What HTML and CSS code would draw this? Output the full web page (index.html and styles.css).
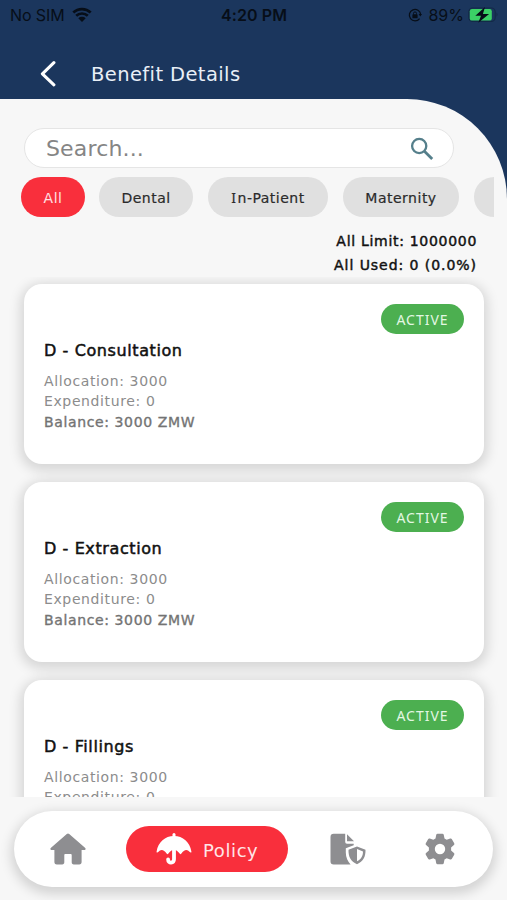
FILE: index.html
```html
<!DOCTYPE html>
<html lang="en">
<head>
<meta charset="utf-8">
<title>Benefit Details</title>
<link rel="stylesheet" href="styles.css">
</head>
<body>
<header class="top">
  <div class="status">
    <div class="status-left"><span class="carrier">No SIM</span>
      <svg class="wifi" width="20" height="16" viewBox="0 0 20 16"><path d="M1.3 5.6a12.6 12.6 0 0 1 17.4 0M4.2 8.8a8.4 8.4 0 0 1 11.6 0" fill="none" stroke="#070e18" stroke-width="2.7"/><path d="M6.3 11.2a5.4 5.4 0 0 1 7.4 0L10 15z" fill="#070e18"/></svg>
    </div>
    <span class="clock">4:20 PM</span>
    <div class="status-right">
      <svg width="14" height="14" viewBox="0 0 14 14"><path d="M11.6 10.6A5.7 5.7 0 1 1 12.7 6.5" fill="none" stroke="#070e18" stroke-width="1.3"/><path d="M10.6 6h3.4l-1.7 2.5z" fill="#070e18"/><rect x="4.4" y="6.3" width="5.2" height="4" rx=".6" fill="#070e18"/><path d="M5.5 6.5V5.4a1.5 1.5 0 0 1 3 0v1.1" fill="none" stroke="#070e18"/></svg>
      <span class="percent">89%</span>
      <svg class="battery" width="30" height="16" viewBox="0 0 30 16"><rect x=".8" y="1" width="26.4" height="13.4" rx="4" fill="none" stroke="#132a47" stroke-width="1.2"/><rect x="1.8" y="2" width="22" height="11.6" rx="2.2" fill="#3bd166"/><path d="M28.5 5.6q2 2.1 0 4.200z" fill="#132a47"/><path d="M17 0 7.300 8.700H13L10.300 15.800l10.800-8.900h-6.200z" fill="#070e18"/></svg>
    </div>
  </div>
  <div class="title-row">
    <svg class="back" width="18" height="28" viewBox="0 0 18 28"><path d="M15.9 2.7 4.400 13.800l11.500 11" fill="none" stroke="#fff" stroke-width="3.1" stroke-linecap="round" stroke-linejoin="round"/></svg>
    <h1>Benefit Details</h1>
  </div>
</header>
<main class="sheet">
  <div class="search"><span class="hint">Search...</span>
    <svg width="24" height="24" viewBox="0 0 24 24"><circle cx="9.2" cy="9" r="7.1" fill="none" stroke="#557f8b" stroke-width="2.3"/><path d="m14.4 14.2 7.8 7.7" stroke="#557f8b" stroke-width="2.8"/></svg>
  </div>
  <div class="chips">
    <span class="chip chip-all"><b>All</b></span>
    <span class="chip chip-dental"><b>Dental</b></span>
    <span class="chip chip-in"><b><span class="serif-cap">I</span>n-Patient</b></span>
    <span class="chip chip-mat"><b>Maternity</b></span>
    <span class="chip chip-next"></span>
  </div>
  <div class="totals"><p class="limit">All Limit: 1000000</p><p class="used">All Used: 0 (0.0%)</p></div>
  <div class="list">
    <article class="card"><span class="badge">ACTIVE</span><h2>D - Consultation</h2><p class="alloc">Allocation: 3000</p><p class="exp">Expenditure: 0</p><p class="balance">Balance: 3000 ZMW</p></article>
    <article class="card"><span class="badge">ACTIVE</span><h2>D - Extraction</h2><p class="alloc">Allocation: 3000</p><p class="exp">Expenditure: 0</p><p class="balance">Balance: 3000 ZMW</p></article>
    <article class="card"><span class="badge">ACTIVE</span><h2>D - Fillings</h2><p class="alloc">Allocation: 3000</p><p class="exp">Expenditure: 0</p></article>
  </div>
  <nav class="nav">
    <svg class="home" width="36" height="32" viewBox="0 0 36 32"><path d="M16.8.9 1 14.8c-1.2 1.1-.5 2.2 1 2.2h2.4v12c0 1.6.8 2.4 2.4 2.4h5.4c1.4 0 2.1-.7 2.1-2.1v-7.1c0-.8.4-1.2 1.2-1.2h5c.8 0 1.2.4 1.2 1.2v7.1c0 1.4.7 2.1 2.1 2.1h5.4c1.6 0 2.4-.8 2.4-2.4V17H34c1.5 0 2.2-1.1 1-2.2L19.2.9q-1.2-1-2.4 0z" fill="#8e8e91"/></svg>
    <div class="policy">
      <svg width="36" height="32" viewBox="0 0 36 32"><path d="M18 1.5v4" stroke="#fff" stroke-width="3" stroke-linecap="round"/><path d="M.6 18.4C2.2 9 9 3 18 3s15.8 6 17.4 15.4c.2 1.2-.9 1.6-1.6.7-2.7-3.3-5.7-2.5-8.4 1.5-.5.8-1.3.8-1.8 0-3.5-5.1-7.7-5.1-11.2 0-.5.8-1.3.8-1.8 0-2.7-4-5.7-4.8-8.4-1.5-.7.9-1.8.5-1.6-.7z" fill="#fff"/><path d="M18 16v10.2c0 4.4-5.9 4.4-5.9.3" fill="none" stroke="#fff" stroke-width="3.8" stroke-linecap="round"/></svg>
      <span>Policy</span>
    </div>
    <svg class="claims" width="36" height="32" viewBox="0 0 36 32"><path d="M3.7.8h11.5v8.1q0 1.8 1.8 1.8h6.7v1.5l-7.9 3.1v4.1c0 5 2 9 4.8 12H3.7Q.5 31.4.5 28.2V4Q.5.8 3.7.8z" fill="#8e8e91"/><path d="M17 1.2 24 8.3h-7z" fill="#8e8e91"/><path fill-rule="evenodd" d="m27 13.4 8.5 3.3c.2 7-2.2 11.7-8.5 14.5-6.300-2.800-8.700-7.500-8.500-14.500zm0 2.700v12.200c4.300-2 5.900-5.300 6-9.800z" fill="#8e8e91"/></svg>
    <svg class="gear" width="32" height="32" viewBox="0 0 32 32"><path fill-rule="evenodd" d="M13.6.7h4.8q1.2 0 1.4 1.2l.7 3.6 2.2 1.3 3.5-1.2q1.1-.4 1.7.6l2.3 4q.6 1-.3 1.8l-2.8 2.4v3.2l2.8 2.4q.9.8.3 1.8l-2.3 4q-.6 1-1.7.6l-3.5-1.2-2.2 1.3-.7 3.6q-.2 1.2-1.4 1.2h-4.8q-1.2 0-1.4-1.2l-.7-3.6-2.2-1.3-3.5 1.2q-1.1.4-1.7-.6l-2.3-4q-.6-1 .3-1.8l2.8-2.4v-3.2l-2.8-2.4q-.9-.8-.3-1.8l2.3-4q.6-1 1.7-.6l3.5 1.2 2.2-1.3.7-3.6Q12.4.7 13.6.7zM16 10.8a5.2 5.2 0 1 0 0 10.4 5.2 5.2 0 0 0 0-10.4z" fill="#8e8e91"/></svg>
  </nav>
</main>
</body>
</html>
```
FILE: styles.css
```css
* { box-sizing: border-box; }
body { margin: 0; width: 507px; height: 900px; overflow: hidden; background: #1b365d; font-family: Verdana, "DejaVu Sans", sans-serif; white-space: nowrap; }
h1, h2, p { margin: 0; }
svg { display: block; flex: none; }
.top { height: 99px; }
.status { display: grid; grid-template-columns: 1fr auto 1fr; height: 30px; align-items: center; padding: 0 10px; color: #070e18; font-family: Inter, "Liberation Sans", sans-serif; font-size: 16px; line-height: 30px; }
.status-left, .status-right { display: flex; align-items: center; }
.status-left { gap: 7px; }
.status-right { justify-content: flex-end; gap: 6px; }
.carrier { letter-spacing: -.1px; }
.clock { font-weight: 600; letter-spacing: .1px; margin-left: 1px; }
.battery { margin: 0 -1px 0 -2px; }
.title-row { display: flex; align-items: center; height: 28px; margin-top: 30px; padding-left: 38px; }
h1 { margin-left: 35px; padding-top: 2px; font-size: 19.5px; font-weight: 400; line-height: 28px; letter-spacing: .4px; color: #e9eff7; }
.sheet { height: 801px; padding-top: 29px; background: #f7f7f7; border-top-right-radius: 100px; }
.search { display: flex; align-items: center; justify-content: space-between; width: 430px; height: 40px; margin-left: 24px; padding: 1px 19px 0 21px; border: 1px solid #e5e5e5; border-radius: 21px; background: #fff; color: #858585; font-size: 22px; line-height: 38px; letter-spacing: .15px; }
.hint { padding-top: 1px; }
.chips { display: flex; gap: 15px; width: 473px; height: 40px; margin: 9px 0 0 21px; overflow: hidden; }
.chip { display: flex; flex: none; justify-content: center; align-items: center; width: 94px; border-radius: 20px; background: #e0e0e0; color: #2b2b2b; font-size: 14px; letter-spacing: .5px; }
.chip b { padding-top: 1px; font-weight: 400; -webkit-text-stroke: .2px; }
.serif-cap { font-family: "Noto Sans", sans-serif; line-height: 0; letter-spacing: 1.5px; }
.chip-all { width: 64px; background: #f92f3c; color: #ffe0e2; }
.chip-all b { -webkit-text-stroke: 0; }
.chip-dental { margin-left: -1px; }
.chip-in { width: 120px; }
.chip-mat { width: 116px; }
.totals { margin-top: 12px; padding-right: 30px; text-align: right; color: #111; font-size: 14px; line-height: 24px; letter-spacing: .7px; -webkit-text-stroke: .45px #111; }
.used { letter-spacing: .95px; }
.list { height: 520px; padding: 7px 23px 0 24px; overflow: hidden; }
.card { display: flex; flex-direction: column; height: 180px; margin-bottom: 18px; padding: 20px; border-radius: 18px; background: #fff; color: #8c8c8c; font-size: 14px; line-height: 20.3px; letter-spacing: .62px; box-shadow: 0 3px 12px 4px rgba(0,0,0,.13); }
.badge { align-self: flex-end; width: 83px; height: 30px; border-radius: 15px; background: #4caf50; color: #e3f7e3; font-family: "Noto Sans", sans-serif; font-size: 14px; line-height: 31px; text-align: center; letter-spacing: 1px; }
h2 { margin: 5px 0 8px; color: #111; font-size: 16px; font-weight: 400; line-height: 24px; letter-spacing: .6px; -webkit-text-stroke: .5px #111; }
.balance { color: #737373; -webkit-text-stroke: .35px #737373; }
.nav { display: flex; align-items: center; width: 479px; height: 76px; margin: 14px 0 0 14px; padding-left: 36px; border-radius: 38px; background: #fff; box-shadow: 0 4px 12px 3px rgba(0,0,0,.15); }
.policy { display: flex; align-items: center; width: 162px; height: 46px; margin: 0 42px 0 40px; padding-left: 30px; gap: 11px; border-radius: 23px; background: #f92f3c; color: #ffe5e7; font-size: 18px; letter-spacing: .6px; }
.policy span { padding-top: 2px; }
.gear { margin-left: 58px; }
```
